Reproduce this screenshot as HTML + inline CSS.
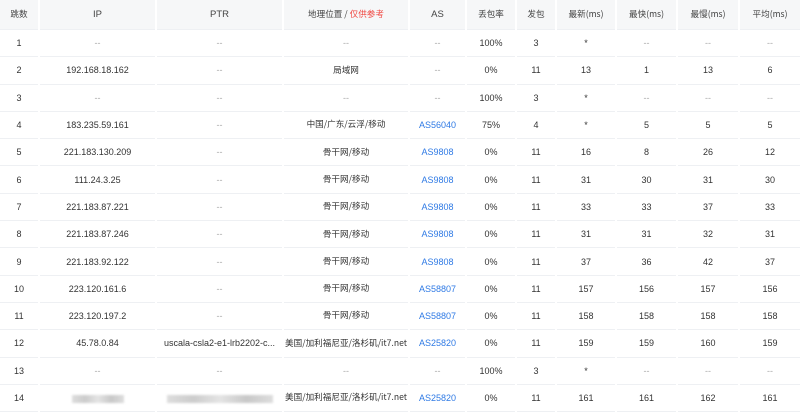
<!DOCTYPE html>
<html><head><meta charset="utf-8"><style>
body{margin:0;background:#fff;font-family:"Liberation Sans","Noto Sans CJK SC",sans-serif;font-size:9px;color:#333;width:800px;height:409px;overflow:hidden}
table{border-collapse:separate;border-spacing:2px 0;width:804px;margin-left:-2px;table-layout:fixed}
th{background:#f6f7f8;font-weight:normal;height:29px;font-size:9.5px;color:#444;border-bottom:1px solid #eef0f3;line-height:12px}
td{height:26.3px;text-align:center;border-bottom:1px solid #eef0f3;padding:0;white-space:nowrap;overflow:hidden;line-height:12px;vertical-align:middle}
th{text-align:center;padding:0}
td>*,th>*{vertical-align:middle}
.c{font-family:"Noto Sans CJK SC","Liberation Sans",sans-serif;font-size:8.6px;line-height:12px;display:inline-block}
td .c{position:relative;top:-1px}
.r{color:#f0453f}.b{color:#2f7ae5}.g{color:#aaa}
.blur{display:inline-block;height:8px;background:linear-gradient(90deg,#ddd,#ccc,#e4e4e4,#c8c8c8,#ddd);filter:blur(1px)}
</style></head><body>
<table>
<colgroup><col style="width:38px"><col style="width:115px"><col style="width:125px"><col style="width:124px"><col style="width:55px"><col style="width:48px"><col style="width:38px"><col style="width:58px"><col style="width:59px"><col style="width:60px"><col style="width:60px"></colgroup>
<tr><th><span class="c">跳数</span></th><th>IP</th><th>PTR</th><th><span class="c">地理位置 / <span class="r">仅供参考</span></span></th><th>AS</th><th><span class="c">丢包率</span></th><th><span class="c">发包</span></th><th><span class="c">最新(ms)</span></th><th><span class="c">最快(ms)</span></th><th><span class="c">最慢(ms)</span></th><th><span class="c">平均(ms)</span></th></tr>
<tr><td>1</td><td class="g">--</td><td class="g">--</td><td class="g">--</td><td class="g">--</td><td>100%</td><td>3</td><td>*</td><td class="g">--</td><td class="g">--</td><td class="g">--</td></tr>
<tr><td>2</td><td>192.168.18.162</td><td class="g">--</td><td><span class="c">局域网</span></td><td class="g">--</td><td>0%</td><td>11</td><td>13</td><td>1</td><td>13</td><td>6</td></tr>
<tr><td>3</td><td class="g">--</td><td class="g">--</td><td class="g">--</td><td class="g">--</td><td>100%</td><td>3</td><td>*</td><td class="g">--</td><td class="g">--</td><td class="g">--</td></tr>
<tr><td>4</td><td>183.235.59.161</td><td class="g">--</td><td><span class="c">中国/广东/云浮/移动</span></td><td class="b">AS56040</td><td>75%</td><td>4</td><td>*</td><td>5</td><td>5</td><td>5</td></tr>
<tr><td>5</td><td>221.183.130.209</td><td class="g">--</td><td><span class="c">骨干网/移动</span></td><td class="b">AS9808</td><td>0%</td><td>11</td><td>16</td><td>8</td><td>26</td><td>12</td></tr>
<tr><td>6</td><td>111.24.3.25</td><td class="g">--</td><td><span class="c">骨干网/移动</span></td><td class="b">AS9808</td><td>0%</td><td>11</td><td>31</td><td>30</td><td>31</td><td>30</td></tr>
<tr><td>7</td><td>221.183.87.221</td><td class="g">--</td><td><span class="c">骨干网/移动</span></td><td class="b">AS9808</td><td>0%</td><td>11</td><td>33</td><td>33</td><td>37</td><td>33</td></tr>
<tr><td>8</td><td>221.183.87.246</td><td class="g">--</td><td><span class="c">骨干网/移动</span></td><td class="b">AS9808</td><td>0%</td><td>11</td><td>31</td><td>31</td><td>32</td><td>31</td></tr>
<tr><td>9</td><td>221.183.92.122</td><td class="g">--</td><td><span class="c">骨干网/移动</span></td><td class="b">AS9808</td><td>0%</td><td>11</td><td>37</td><td>36</td><td>42</td><td>37</td></tr>
<tr><td>10</td><td>223.120.161.6</td><td class="g">--</td><td><span class="c">骨干网/移动</span></td><td class="b">AS58807</td><td>0%</td><td>11</td><td>157</td><td>156</td><td>157</td><td>156</td></tr>
<tr><td>11</td><td>223.120.197.2</td><td class="g">--</td><td><span class="c">骨干网/移动</span></td><td class="b">AS58807</td><td>0%</td><td>11</td><td>158</td><td>158</td><td>158</td><td>158</td></tr>
<tr><td>12</td><td>45.78.0.84</td><td>uscala-csla2-e1-lrb2202-c...</td><td><span class="c">美国/加利福尼亚/洛杉矶/it7.net</span></td><td class="b">AS25820</td><td>0%</td><td>11</td><td>159</td><td>159</td><td>160</td><td>159</td></tr>
<tr><td>13</td><td class="g">--</td><td class="g">--</td><td class="g">--</td><td class="g">--</td><td>100%</td><td>3</td><td>*</td><td class="g">--</td><td class="g">--</td><td class="g">--</td></tr>
<tr><td>14</td><td><span class="blur" style="width:52px"></span></td><td><span class="blur" style="width:106px"></span></td><td><span class="c">美国/加利福尼亚/洛杉矶/it7.net</span></td><td class="b">AS25820</td><td>0%</td><td>11</td><td>161</td><td>161</td><td>162</td><td>161</td></tr>
</table>
</body></html>
